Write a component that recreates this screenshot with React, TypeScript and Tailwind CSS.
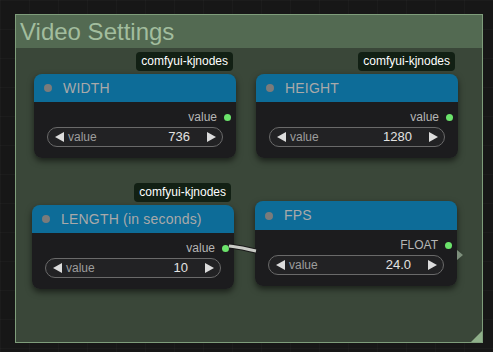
import React from "react";

// ============================================
// Node Component
// ============================================

interface NodeProps {
  title: string;
  output: string;
  value: string;
  badge?: boolean;
  left: string;
  top: string;
  titleH?: string;
}

const Arrow = ({ dir }: { dir: "left" | "right" }) => (
  <svg width="9" height="10" viewBox="0 0 9 10" className="shrink-0">
    <polygon points={dir === "left" ? "9,0 9,10 0,5" : "0,0 0,10 9,5"} fill="#dcdcdc" />
  </svg>
);

const Node = ({ title, output, value, badge, left, top, titleH = "h-[28px]" }: NodeProps) => (
  <div className={`absolute ${left} ${top} w-[202px]`}>
    {badge && (
      <div className="absolute right-[3px] top-[-22px] h-[19px] px-[5px] rounded-[4px] bg-[#122014] text-[12px] leading-[19px] text-white">
        comfyui-kjnodes
      </div>
    )}
    <div className="rounded-[8px] shadow-[0_3px_6px_rgba(0,0,0,0.55)] overflow-hidden">
      <div className={`${titleH} bg-[#0d6c98] flex items-center pl-[10px]`}>
        <span className="w-[8px] h-[8px] rounded-full bg-[#7b7b7b]" />
        <span className="ml-[11px] text-[14px] text-[#a9a9a9] tracking-[0.2px]">{title}</span>
      </div>
      <div className="bg-[#1c1c1e] h-[56px] pt-[8px] px-[13px]">
        <div className="flex items-center justify-end h-[14px] text-[12px] text-[#b5b5b5] mr-[-8px]">
          <span>{output}</span>
          <span className="ml-[7px] w-[7px] h-[7px] rounded-full bg-[#6be36b]" />
        </div>
        <div className="mt-[3px] h-[20px] rounded-full border border-[#6a6a6a] bg-[#222224] flex items-center pl-[7px] pr-[6px] text-[12px]">
          <Arrow dir="left" />
          <span className="ml-[4px] text-[#9d9d9d]">value</span>
          <span className="ml-auto text-[13px] text-[#e2e2e2]">{value}</span>
          <span className="ml-[17px] flex">
            <Arrow dir="right" />
          </span>
        </div>
      </div>
    </div>
  </div>
);

// ============================================
// Main Component
// ============================================

export default function App() {
  return (
    <div className="relative w-[493px] h-[352px] overflow-hidden bg-[#171717] bg-[linear-gradient(to_right,rgba(255,255,255,0.025)_1px,transparent_1px),linear-gradient(to_bottom,rgba(255,255,255,0.025)_1px,transparent_1px)] bg-[size:29px_29px] font-['Liberation_Sans',Arial,sans-serif]">
      {/* group */}
      <div className="absolute left-[15px] top-[14px] w-[468px] h-[329px] border border-[#7f9d7b] bg-[#3a4739] flex flex-col">
        <div className="h-[33px] bg-[#536a52] pl-[4px] text-[24px] leading-[33px] text-[#a2bd9e]">
          Video Settings
        </div>
        <div className="flex-1" />
        <svg className="absolute right-0 bottom-0" width="11" height="11" viewBox="0 0 11 11">
          <polygon points="11,0 11,11 0,11" fill="#8fb08a" />
        </svg>
      </div>

      <Node title="WIDTH" output="value" value="736" badge left="left-[34px]" top="top-[74px]" />
      <Node title="HEIGHT" output="value" value="1280" badge left="left-[256px]" top="top-[74px]" />
      <Node title="LENGTH (in seconds)" output="value" value="10" badge left="left-[32px]" top="top-[205px]" />
      <Node title="FPS" output="FLOAT" value="24.0" left="left-[255px]" top="top-[201px]" titleH="h-[29px]" />

      {/* link */}
      <svg className="absolute left-0 top-0" width="493" height="352">
        <path d="M229 246 C240 247, 246 249, 256 251" stroke="#1a1a1a" strokeWidth="5" fill="none" />
        <path d="M229 246 C240 247, 246 249, 256 251" stroke="#c9cbc6" strokeWidth="3" fill="none" />
        <polygon points="457,250 463,255 457,260" fill="#7d8f7c" />
      </svg>
    </div>
  );
}
